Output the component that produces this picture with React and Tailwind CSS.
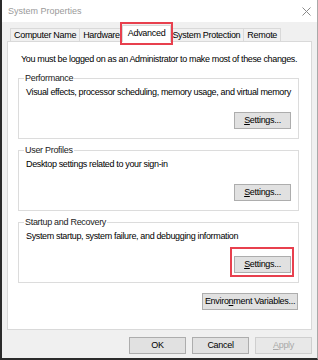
import React from "react";

function Btn({ children, w = "w-[57px]", disabled = false }) {
  return (
    <div
      className={`${w} h-[17px] flex items-center justify-center border text-[9px] tracking-[-0.3px] leading-none ${
        disabled
          ? "bg-[#e8e8e8] border-[#cfcfcf] text-[#a8a8a8]"
          : "bg-[#e1e1e1] border-[#adadad] text-black"
      }`}
    >
      {children}
    </div>
  );
}

function Group({ title, desc, extra = "", highlight = false }) {
  return (
    <fieldset className={`border border-[#dcdcdc] px-[7px] pb-[9px] ${extra}`}>
      <legend className="-ml-[2px] px-[1px] text-[9px] leading-[12px] tracking-[-0.3px] text-[#222]">
        {title}
      </legend>
      <div className="mt-[2px] text-[9px] leading-[12px] tracking-[-0.35px] text-black whitespace-nowrap">
        {desc}
      </div>
      <div className="flex justify-end mt-[14px]">
        <div className="relative">
          <Btn>
            <span className="underline">S</span>ettings...
          </Btn>
          {highlight && (
            <div className="absolute -left-[4px] -right-[3px] -top-[9px] -bottom-[4px] border-2 border-[#e8404e]" />
          )}
        </div>
      </div>
    </fieldset>
  );
}

function Tab({ children }) {
  return (
    <div className="h-[13px] -ml-px first:ml-0 px-[3px] border border-b-0 border-[#d9d9d9] bg-[#f0f0f0] text-[9px] leading-[12px] tracking-[-0.3px] text-black whitespace-nowrap">
      {children}
    </div>
  );
}

export default function App() {
  return (
    <div className="w-[318px] h-[360px] flex flex-col bg-[#f0f0f0] border-l-2 border-b-2 border-r border-[#2b2b2b] border-r-[#a9a9a9] font-['Liberation_Sans',Arial,sans-serif] overflow-hidden">
      {/* Title bar */}
      <div className="h-[22px] shrink-0 bg-white flex items-center justify-between pl-[6px] pr-[5px]">
        <span className="text-[9px] text-[#9a9a9a] leading-none">System Properties</span>
        <svg width="9" height="9" viewBox="0 0 9 9" className="mr-[1px]">
          <path d="M0.5 0.5 L8.5 8.5 M8.5 0.5 L0.5 8.5" stroke="#8a8a8a" strokeWidth="1" fill="none" />
        </svg>
      </div>

      {/* Tabs */}
      <div className="h-[19px] shrink-0 flex items-end pl-[8px] relative z-10">
        <Tab>Computer Name</Tab>
        <Tab>Hardware</Tab>
        <div className="relative -mx-[2px] z-10 -mb-px h-[17px] px-[5px] border border-b-0 border-[#d9d9d9] bg-white text-[9px] leading-[14px] tracking-[-0.3px] text-black">
          Advanced
          <div className="absolute -left-[3px] -right-[3px] -top-[4px] -bottom-[3px] border-2 border-[#e8404e]" />
        </div>
        <Tab>System Protection</Tab>
        <Tab>Remote</Tab>
      </div>

      {/* Panel */}
      <div className="h-[289px] shrink-0 ml-[5px] mr-[5px] bg-white border border-[#d9d9d9] flex flex-col">
        <div className="pt-[11px] pl-[13px] text-[9px] leading-[12px] tracking-[-0.35px] text-black whitespace-nowrap">
          You must be logged on as an Administrator to make most of these changes.
        </div>
        <div className="ml-[10px] mr-[12px] flex flex-col">
          <Group
            title="Performance"
            desc="Visual effects, processor scheduling, memory usage, and virtual memory"
            extra="mt-[7px]"
          />
          <Group
            title="User Profiles"
            desc="Desktop settings related to your sign-in"
            extra="mt-[5px]"
          />
          <Group
            title="Startup and Recovery"
            desc="System startup, system failure, and debugging information"
            extra="mt-[5px]"
            highlight
          />
          <div className="flex justify-end mt-[10px] mr-[1px]">
            <Btn w="w-[96px]">
              Enviro<span className="underline">n</span>ment Variables...
            </Btn>
          </div>
        </div>
      </div>

      {/* Bottom buttons */}
      <div className="mt-[7px] mr-[5px] flex justify-end gap-[6px]">
        <Btn>OK</Btn>
        <Btn>Cancel</Btn>
        <Btn disabled>
          <span className="underline">A</span>pply
        </Btn>
      </div>
    </div>
  );
}
